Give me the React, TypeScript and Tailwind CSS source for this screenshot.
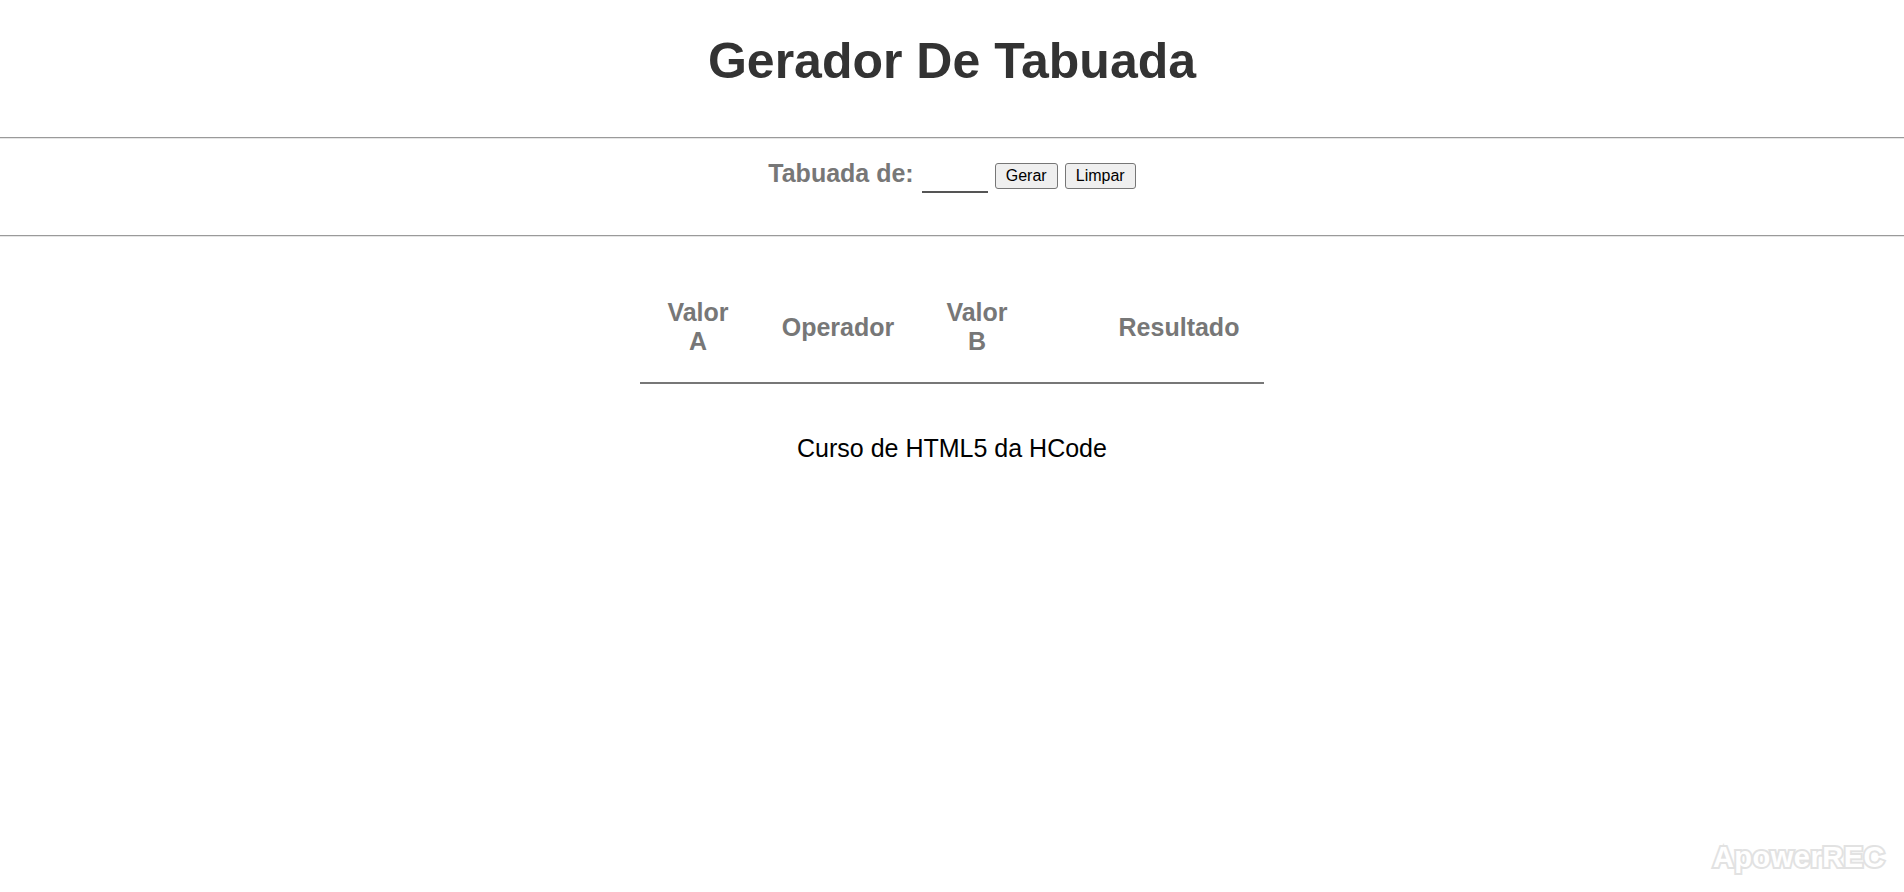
const COLUMNS = [
  { key: "a", label: "Valor A", narrow: true, cell: "" },
  { key: "op", label: "Operador", narrow: false, cell: "" },
  { key: "b", label: "Valor B", narrow: true, cell: "" },
  { key: "res", label: "Resultado", narrow: false, cell: "pl-[60px]" },
];

function Rule() {
  // stand-in for the browser's default inset <hr>
  return <div className="h-[2px] w-full border-t border-b border-t-[#9a9a9a] border-b-[#e6e6e6]" />;
}

export default function App() {
  return (
    <div className="relative min-h-[892px] bg-white font-['Liberation_Sans',Arial,sans-serif]">
      <header className="h-[137px] pt-[32px]">
        <h1 className="text-center text-[50px] leading-[58px] font-bold text-[#333333]">Gerador De Tabuada</h1>
      </header>

      <Rule />

      <form className="flex h-[96px] justify-center items-start pt-[20px]" onSubmit={(e) => e.preventDefault()}>
        <label htmlFor="tabuada" className="text-[25px] leading-[28px] font-bold text-[#777777]">
          Tabuada de:
        </label>
        <input
          id="tabuada"
          type="text"
          className="ml-[8px] mt-[5px] h-[29px] w-[66px] border-b-2 border-[#555555] bg-transparent outline-none"
        />
        <button
          type="button"
          className="ml-[7px] mt-[4px] h-[26px] w-[63px] rounded-[3px] border border-[#767676] bg-[#efefef] text-[16px] text-black"
        >
          Gerar
        </button>
        <button
          type="button"
          className="ml-[7px] mt-[4px] h-[26px] w-[71px] rounded-[3px] border border-[#767676] bg-[#efefef] text-[16px] text-black"
        >
          Limpar
        </button>
      </form>

      <Rule />

      <div className="mx-auto mt-[35px] w-[624px]">
        <div className="grid grid-cols-[116px_164px_114px_230px] items-center pt-[26px] pb-[26px]">
          {COLUMNS.map((col) => (
            <div key={col.key} className={`text-center text-[25px] leading-[29px] font-bold text-[#777777] ${col.cell}`}>
              {col.narrow ? <span className="mx-auto block w-[72px]">{col.label}</span> : col.label}
            </div>
          ))}
        </div>
        <div className="h-[2px] bg-[#777777]" />
      </div>

      <p className="mt-[50px] text-center text-[25px] leading-[28px] text-black">Curso de HTML5 da HCode</p>

      <div className="absolute right-[19px] bottom-[13px] text-[29px] font-black tracking-[0.5px] text-white [paint-order:stroke_fill] [-webkit-text-stroke:4px_#e2e2e2]">
        ApowerREC
      </div>
    </div>
  );
}
